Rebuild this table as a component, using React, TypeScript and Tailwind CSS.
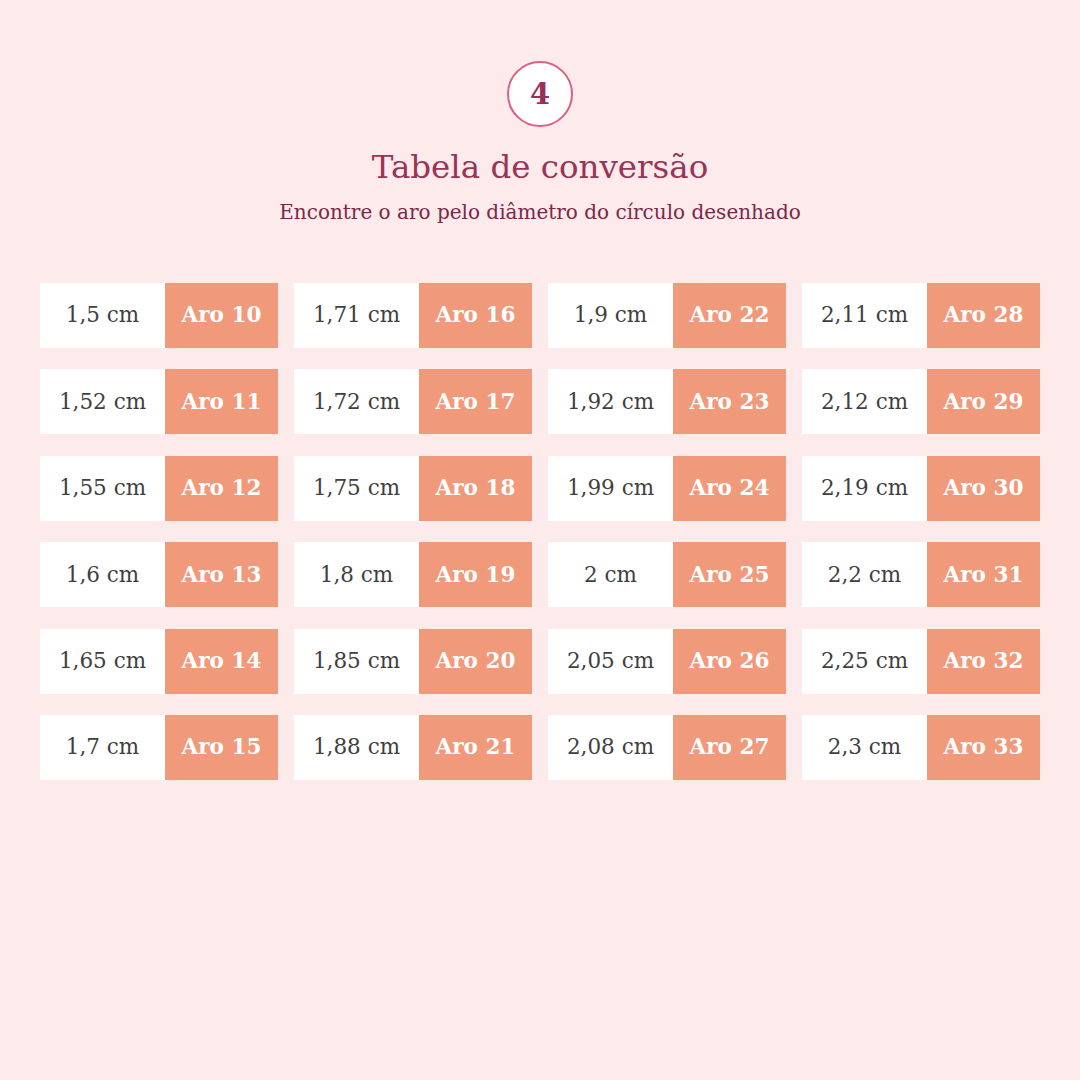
import React from "react";

const cm = [
  "1,5 cm","1,52 cm","1,55 cm","1,6 cm","1,65 cm","1,7 cm",
  "1,71 cm","1,72 cm","1,75 cm","1,8 cm","1,85 cm","1,88 cm",
  "1,9 cm","1,92 cm","1,99 cm","2 cm","2,05 cm","2,08 cm",
  "2,11 cm","2,12 cm","2,19 cm","2,2 cm","2,25 cm","2,3 cm",
];

export default function App() {
  const cells: { cm: string; aro: number }[] = [];
  for (let r = 0; r < 6; r++) {
    for (let c = 0; c < 4; c++) {
      const i = c * 6 + r;
      cells.push({ cm: cm[i], aro: 10 + i });
    }
  }
  return (
    <div
      className="w-[1080px] h-[1080px] bg-[#fcebea] flex flex-col items-center pt-[61px]"
      style={{ fontFamily: '"DejaVu Serif", serif' }}
    >
      <div className="w-[66px] h-[66px] rounded-full border-2 border-[#dc5f86] bg-white flex items-center justify-center">
        <span className="text-[29px] font-bold text-[#98305a] leading-none">4</span>
      </div>
      <h1 className="mt-[20px] text-[32.5px] leading-[40px] text-[#9a3358]">Tabela de conversão</h1>
      <p className="mt-[11px] text-[20px] leading-[28px] text-[#7e2648]">
        Encontre o aro pelo diâmetro do círculo desenhado
      </p>
      <div className="mt-[57px] w-[1000px] grid grid-cols-4 gap-x-[16px] gap-y-[21.4px]">
        {cells.map((cell) => (
          <div key={cell.aro} className="flex h-[65px]">
            <div className="w-[125px] bg-white flex items-center justify-center text-[21.5px] text-[#3f3f3f]">
              {cell.cm}
            </div>
            <div className="flex-1 bg-[#f0997b] flex items-center justify-center text-[21.5px] font-bold text-white">
              Aro {cell.aro}
            </div>
          </div>
        ))}
      </div>
    </div>
  );
}
